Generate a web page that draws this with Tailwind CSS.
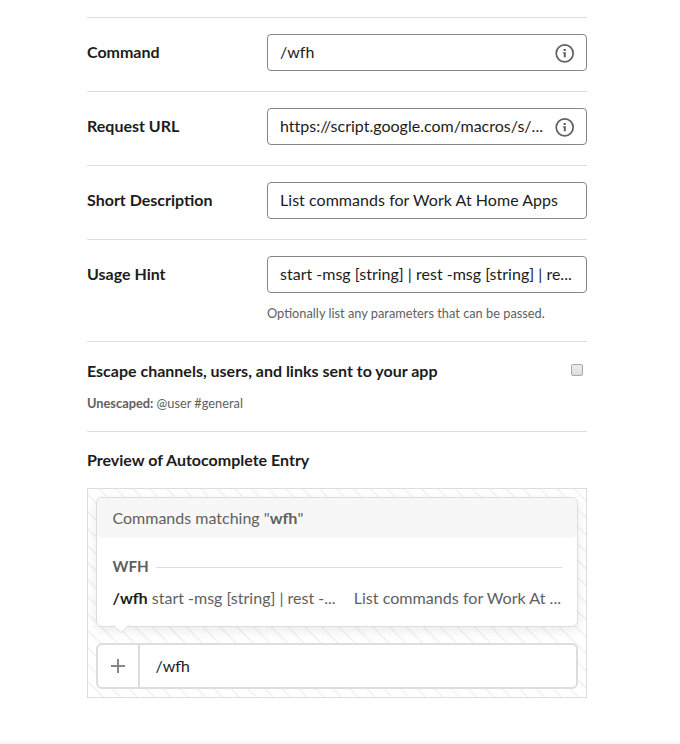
<!DOCTYPE html>
<html lang="en">
<head>
<meta charset="utf-8">
<title>Edit Command</title>
<script src="https://cdn.jsdelivr.net/npm/@tailwindcss/browser@4"></script>
</head>
<body class="bg-white font-['Lato',sans-serif] text-[#1d1c1d] text-base leading-6">
<main class="w-[500px] ml-[87px] pt-[17px] h-[741px]">
  <section class="h-[74px] border-t border-[#ddd] pt-4 flex">
    <label class="w-[180px] pt-1.5 font-bold tracking-[-0.01px]">Command</label>
    <div class="w-[320px] h-[37px] border border-[#868686] rounded flex items-center justify-between pl-3 pr-[11px]">
      <span class="whitespace-nowrap pb-0.5 tracking-[0.03px]">/wfh</span>
      <svg class="w-5 h-5" viewBox="0 0 20 20" fill="#616061"><circle cx="9.700" cy="10.300" r="8.500" stroke="#616061" stroke-width="1.7" fill="none"/><rect x="8.600" y="6" width="2.200" height="2"/><path d="M7.900 9.200h2.900v5h-2V10.500h-.9Z"/></svg>
    </div>
  </section>
  <section class="h-[74px] border-t border-[#ddd] pt-4 flex">
    <label class="w-[180px] pt-1.5 font-bold">Request URL</label>
    <div class="w-[320px] h-[37px] border border-[#868686] rounded flex items-center justify-between pl-3 pr-[11px]">
      <span class="whitespace-nowrap pb-0.5 tracking-[0.01px]">https://script.google.com/macros/s/...</span>
      <svg class="w-5 h-5" viewBox="0 0 20 20" fill="#616061"><circle cx="9.700" cy="10.300" r="8.500" stroke="#616061" stroke-width="1.7" fill="none"/><rect x="8.600" y="6" width="2.200" height="2"/><path d="M7.900 9.200h2.900v5h-2V10.500h-.9Z"/></svg>
    </div>
  </section>
  <section class="h-[74px] border-t border-[#ddd] pt-4 flex">
    <label class="w-[180px] pt-1.5 font-bold">Short Description</label>
    <div class="w-[320px] h-[37px] border border-[#868686] rounded flex items-center px-3">
      <span class="whitespace-nowrap pb-0.5 tracking-[0.04px]">List commands for Work At Home Apps</span>
    </div>
  </section>
  <section class="h-[102px] border-t border-[#ddd] pt-4 flex">
    <label class="w-[180px] pt-1.5 font-bold">Usage Hint</label>
    <div class="w-[320px]">
      <div class="h-[37px] border border-[#868686] rounded flex items-center px-3">
        <span class="whitespace-nowrap pb-0.5 tracking-[0.01px]">start -msg [string] | rest -msg [string] | re...</span>
      </div>
      <p class="mt-2.5 text-[12.8px] leading-5 text-[#616061]">Optionally list any parameters that can be passed.</p>
    </div>
  </section>
  <section class="h-[90px] border-t border-[#ddd] pt-[17px]">
    <div class="flex justify-between">
      <span class="font-bold">Escape channels, users, and links sent to your app</span>
      <span class="w-3 h-3 mt-[5px] mr-1 border border-[#a9a9a9] rounded-[2px] bg-linear-to-b from-[#ededed] to-[#dcdcdc]"></span>
    </div>
    <p class="mt-2.5 text-[12.8px] leading-5 text-[#616061]"><b>Unescaped:</b> @user #general</p>
  </section>
  <section class="border-t border-[#ddd] pt-4">
    <h2 class="font-bold">Preview of Autocomplete Entry</h2>
    <div class="mt-4 h-[210px] border border-[#ddd] p-2 bg-[repeating-linear-gradient(45deg,#fff_0_9.500px,#f3f3f3_10.500px_11.500px,#fff_12px)]">
      <div class="relative h-[130px] rounded-md border border-[#ddd] bg-white shadow-[0_4px_12px_rgba(0,0,0,0.08)] text-[#616061]">
        <div class="h-10 rounded-md bg-[#f7f7f7] pl-[15.5px] leading-[39px]">Commands matching "<b>wfh</b>"</div>
        <div class="mt-4 mx-[15.5px] flex items-center"><b class="text-[15.2px]">WFH</b><span class="ml-[7px] mt-0.5 h-px flex-1 bg-[#ddd]"></span></div>
        <div class="mt-2 ml-[15.5px] mr-4 flex justify-between whitespace-nowrap"><span><b class="text-[#1d1c1d]">/wfh</b> start -msg [string] | rest -...</span><span class="text-[16.1px]">List commands for Work At ...</span></div>
        <svg class="absolute left-[16px] top-[127px] w-4 h-2" viewBox="0 0 16 8"><path d="M0 0L8 7.5L16 0Z" fill="#fff"/><path d="M.5 .5L8 7.5L15.5 .5" fill="none" stroke="#ddd"/></svg>
      </div>
      <div class="mt-4 h-[46px] border-2 border-[#ddd] rounded-md bg-white flex items-center">
        <div class="w-[42px] h-full border-r-2 border-[#ddd] flex items-center justify-center"><svg class="w-4 h-4" viewBox="0 0 16 16" stroke="#868686" stroke-width="2"><path d="M1 8h14M8 1v14"/></svg></div>
        <span class="ml-[15.5px]">/wfh</span>
      </div>
    </div>
  </section>
</main>
<footer class="h-[3px] bg-[#f8f8f8]"></footer>
</body>
</html>
